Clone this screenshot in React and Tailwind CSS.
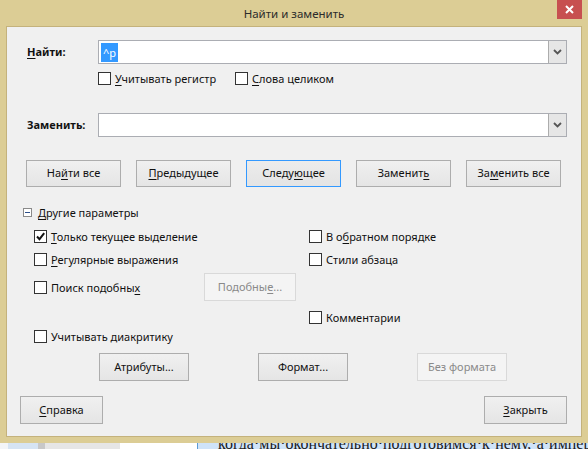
import React from "react";

const U = ({ children }) => <span className="underline underline-offset-[2px]">{children}</span>;

const Box = ({ checked }) => (
  <span className="w-[13px] h-[13px] border border-[#333333] bg-white flex items-center justify-center shrink-0">
    {checked && (
      <svg width="11" height="11" viewBox="0 0 11 11">
        <path d="M2 5.5 L4.5 8.2 L9.2 2.2" fill="none" stroke="#111" strokeWidth="2" />
      </svg>
    )}
  </span>
);

const Cb = ({ checked, children, className = "" }) => (
  <div className={"flex items-center gap-[4px] h-[13px] " + className}>
    <Box checked={checked} />
    <span className="whitespace-nowrap leading-none">{children}</span>
  </div>
);

const Btn = ({ className = "", children, focused, disabled }) => (
  <div
    className={
      "flex items-center justify-center border whitespace-nowrap " +
      (disabled
        ? "border-[#d9d9d9] bg-[#f4f4f4] text-[#8a8a8a] "
        : focused
        ? "border-[#3399ff] bg-gradient-to-b from-[#ececec] to-[#e4e4e4] text-[#111] "
        : "border-[#adadad] bg-gradient-to-b from-[#f0f0f0] to-[#e5e5e5] text-[#111] ") +
      className
    }
  >
    {children}
  </div>
);

const Combo = ({ children }) => (
  <div className="flex h-[24px] w-[469px] border border-[#abadb3] bg-white">
    <div className="flex-1 flex items-center pl-[2px]">{children}</div>
    <div className="w-[18px] border-l border-[#acacac] bg-[#e6e6e6] flex items-center justify-center">
      <svg width="9" height="6" viewBox="0 0 9 6">
        <path d="M1 1 L4.5 4.5 L8 1" fill="none" stroke="#555" strokeWidth="1.8" />
      </svg>
    </div>
  </div>
);

export default function App() {
  return (
    <div className="w-[588px] h-[449px] bg-[#dccd95] flex flex-col overflow-hidden font-['Noto_Sans','Open_Sans',sans-serif] text-[11px] text-[#111]">
      {/* Title bar */}
      <div className="relative h-[26px] shrink-0 flex items-center justify-center">
        <span className="text-[11.5px] text-[#2b2b2b] leading-none mt-[2px]">Найти и заменить</span>
        <div className="absolute top-0 right-[6px] w-[25px] h-[19px] bg-[#c75050] flex items-center justify-center">
          <svg width="9" height="9" viewBox="0 0 9 9">
            <path d="M1 1 L8 8 M8 1 L1 8" stroke="#fff" strokeWidth="2" />
          </svg>
        </div>
      </div>

      {/* Panel */}
      <div className="mx-[6px] h-[411px] shrink-0 border border-[#c4b27c] bg-[#f0f0f0] flex flex-col">
        {/* Find row */}
        <div className="mt-[13px] flex items-center h-[24px]">
          <div className="w-[91px] shrink-0 pl-[20px] font-bold">
            <U>Н</U>айти:
          </div>
          <Combo>
            <span className="bg-[#3399ff] text-white h-[19px] flex items-center px-[2px] leading-none">^p</span>
          </Combo>
        </div>
        <div className="mt-[8px] flex h-[13px] pl-[91px] gap-[23px]">
          <Cb className="w-[114px]">
            <U>У</U>читывать регистр
          </Cb>
          <Cb>
            <U>С</U>лова целиком
          </Cb>
        </div>

        {/* Replace row */}
        <div className="mt-[28px] flex items-center h-[24px]">
          <div className="w-[91px] shrink-0 pl-[20px] font-bold">Заменить:</div>
          <Combo />
        </div>

        {/* Main buttons */}
        <div className="mt-[23px] flex h-[27px] pl-[19px] gap-[15px]">
          <Btn className="w-[95px]">
            На<U>й</U>ти все
          </Btn>
          <Btn className="w-[95px]">
            <U>П</U>редыдущее
          </Btn>
          <Btn className="w-[95px]" focused>
            Следу<U>ю</U>щее
          </Btn>
          <Btn className="w-[95px]">
            Заменит<U>ь</U>
          </Btn>
          <Btn className="w-[95px]">
            За<U>м</U>енить все
          </Btn>
        </div>

        {/* Other options header */}
        <div className="mt-[21px] flex items-center h-[9px] pl-[16px] gap-[6px]">
          <span className="w-[9px] h-[9px] border border-[#8a8a8a] bg-white flex items-center justify-center shrink-0">
            <span className="w-[5px] h-[1px] bg-[#2d4f8a]" />
          </span>
          <span className="leading-none whitespace-nowrap">
            <U>Д</U>ругие параметры
          </span>
        </div>

        {/* Options */}
        <div className="mt-[13px] flex h-[13px] pl-[27px]">
          <Cb checked className="w-[275px]">
            <U>Т</U>олько текущее выделение
          </Cb>
          <Cb>
            В о<U>б</U>ратном порядке
          </Cb>
        </div>
        <div className="mt-[10px] flex h-[13px] pl-[27px]">
          <Cb className="w-[275px]">
            <U>Р</U>егулярные выражения
          </Cb>
          <Cb>Стили абзаца</Cb>
        </div>
        <div className="mt-[7px] flex items-center h-[28px] pl-[27px]">
          <Cb className="w-[170px]">
            Поиск подобны<U>х</U>
          </Cb>
          <Btn className="w-[92px] h-[28px]" disabled>
            Подобны<U>е</U>...
          </Btn>
        </div>
        <div className="mt-[10px] flex h-[13px] pl-[302px]">
          <Cb>Комментарии</Cb>
        </div>
        <div className="mt-[6px] flex h-[13px] pl-[27px]">
          <Cb>Учитывать диакритику</Cb>
        </div>

        {/* Attribute buttons */}
        <div className="mt-[10px] flex h-[28px] pl-[92px] gap-[69px]">
          <Btn className="w-[90px]">Атрибуты...</Btn>
          <Btn className="w-[90px]">Формат...</Btn>
          <Btn className="w-[90px]" disabled>
            Без формата
          </Btn>
        </div>

        {/* Bottom buttons */}
        <div className="mt-[15px] flex justify-between h-[28px] pl-[13px] pr-[14px]">
          <Btn className="w-[83px]">
            <U>С</U>правка
          </Btn>
          <Btn className="w-[83px]">
            <U>З</U>акрыть
          </Btn>
        </div>
      </div>

      {/* bottom frame */}
      <div className="h-[6px] shrink-0" />

      {/* document strip */}
      <div className="h-[6px] shrink-0 flex overflow-hidden">
        <div className="w-[8px] bg-[#f3f5f8]" />
        <div className="w-[30px] bg-[#d6e4f3]" />
        <div className="w-[7px] bg-[#c8c8c8]" />
        <div className="w-[75px] bg-[#e6e6e6]" />
        <div className="w-[77px] bg-white" />
        <div className="flex-1 bg-[#cfe3f8] border-l border-[#5b9bd5] overflow-hidden">
          <div className="mt-[-8px] pl-[20px] whitespace-nowrap font-['Liberation_Serif',serif] text-[16px] leading-[17px] text-[#1a1a1a]">
            когда·мы·окончательно·подготовимся·к·нему,·а·импер
          </div>
        </div>
      </div>
    </div>
  );
}
